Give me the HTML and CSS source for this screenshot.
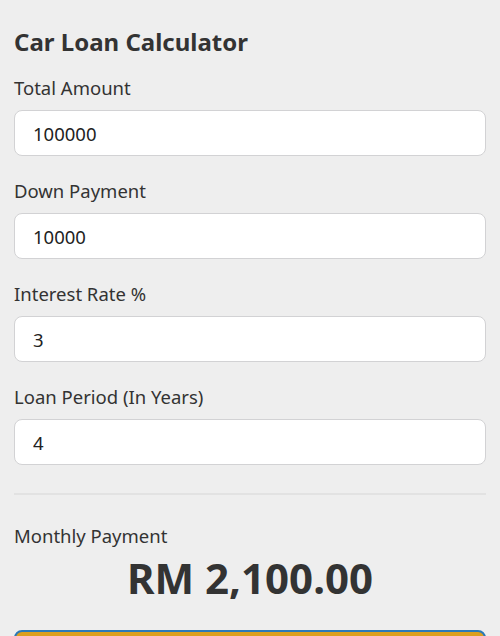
FILE: index.html
```html
<!DOCTYPE html>
<html lang="en">
<head>
    <meta charset="UTF-8">
    <meta name="viewport" content="width=device-width, initial-scale=1.0">
    <title>Car Loan Calculator</title>
    <link rel="stylesheet" href="styles.css">
</head>
<body>
    <div class="calculator">
        <h1>Car Loan Calculator</h1>

        <!-- Loan inputs -->
        <div class="field">
            <label for="amount">Total Amount</label>
            <input type="text" id="amount" value="100000" />
        </div>
        <div class="field">
            <label for="down">Down Payment</label>
            <input type="text" id="down" value="10000" />
        </div>
        <div class="field">
            <label for="rate">Interest Rate %</label>
            <input type="text" id="rate" value="3" />
        </div>
        <div class="field">
            <label for="years">Loan Period (In Years)</label>
            <input type="text" id="years" value="4" />
        </div>

        <hr class="divider">

        <!-- Result -->
        <div class="result">
            <div class="result-label">Monthly Payment</div>
            <div class="result-value">RM 2,100.00</div>
        </div>

        <button class="calc-btn">Calculate</button>
    </div>
</body>
</html>
```

FILE: styles.css
```css
body {
    margin: 0;
    background-color: #eeeeee;
    font-family: "Noto Sans", sans-serif;
    color: #333;
}

.calculator {
    padding: 27px 14px 0;
}

h1 {
    font-size: 24px;
    font-weight: 700;
    line-height: 30px;
    margin: 0 0 19px;
    color: #333;
}

/* Form fields */
.field {
    display: flex;
    flex-direction: column;
    margin-bottom: 23px;
}

.field label {
    font-size: 18.5px;
    line-height: 24px;
    margin-bottom: 10px;
}

.field input {
    height: 46px;
    box-sizing: border-box;
    padding: 0 18px;
    border: 1px solid #d2d2d4;
    border-radius: 8px;
    background: #fff;
    font-family: inherit;
    font-size: 18.5px;
    color: #222;
}

.divider {
    border: none;
    border-top: 2px solid #e2e2e2;
    margin: 28px 0 29px;
}

/* Result */
.result-label {
    font-size: 18.5px;
    line-height: 24px;
}

.result-value {
    text-align: center;
    font-size: 42px;
    font-weight: 700;
    line-height: 56px;
    margin-top: 2px;
}

.calc-btn {
    display: block;
    width: 100%;
    height: 48px;
    margin-top: 24px;
    border: 2px solid #2b79b8;
    border-radius: 8px;
    background-color: #dc9f1f;
    color: #fff;
    font-family: inherit;
    font-size: 18px;
    font-weight: 700;
}
```
